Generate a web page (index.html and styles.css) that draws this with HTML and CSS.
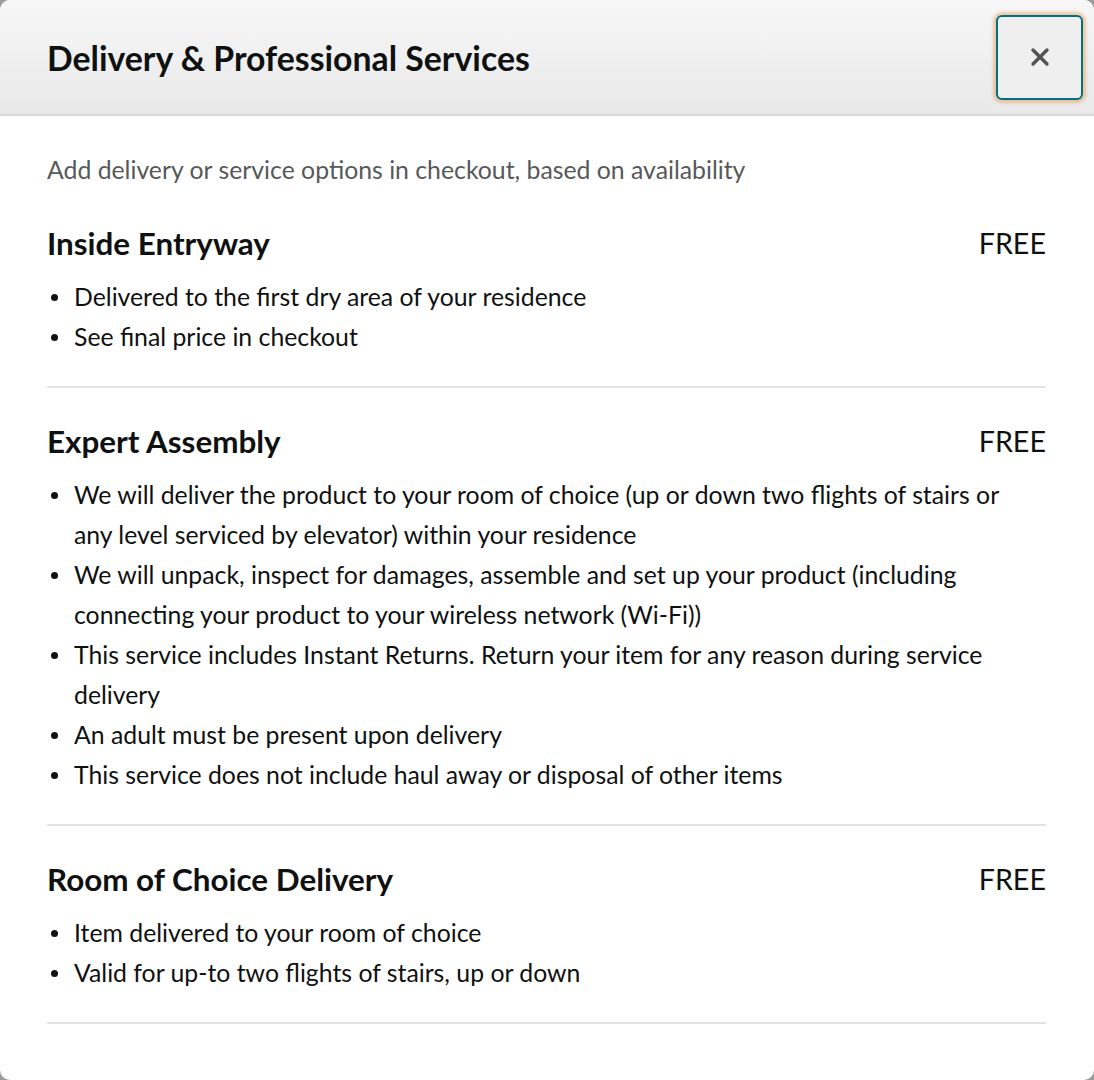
FILE: index.html
```html
<!DOCTYPE html>
<html lang="en">
<head>
    <meta charset="UTF-8">
    <meta name="viewport" content="width=device-width, initial-scale=1">
    <title>Delivery &amp; Professional Services</title>
    <link rel="stylesheet" href="styles.css">
</head>
<body>
<div class="modal">
    <div class="modal_header">
        <h1 class="modal_title">Delivery &amp; Professional Services</h1>
        <button class="close_button" aria-label="Close">
            <svg width="20" height="20" viewBox="0 0 20 20">
                <path d="M3 3 L17 17 M17 3 L3 17" stroke="#545454" stroke-width="3.4" stroke-linecap="round"/>
            </svg>
        </button>
    </div>
    <div class="modal_body">
        <p class="subtitle">Add delivery or service options in checkout, based on availability</p>

        <div class="service">
            <div class="service_head">
                <span class="service_name">Inside Entryway</span>
                <span class="service_price">FREE</span>
            </div>
            <ul class="service_list">
                <li>Delivered to the first dry area of your residence</li>
                <li>See final price in checkout</li>
            </ul>
        </div>

        <div class="service">
            <div class="service_head">
                <span class="service_name">Expert Assembly</span>
                <span class="service_price">FREE</span>
            </div>
            <ul class="service_list">
                <li>We will deliver the product to your room of choice (up or down two flights of stairs or any level serviced by elevator) within your residence</li>
                <li>We will unpack, inspect for damages, assemble and set up your product (including connecting your product to your wireless network (Wi-Fi))</li>
                <li>This service includes Instant Returns. Return your item for any reason during service delivery</li>
                <li>An adult must be present upon delivery</li>
                <li>This service does not include haul away or disposal of other items</li>
            </ul>
        </div>

        <div class="service">
            <div class="service_head">
                <span class="service_name">Room of Choice Delivery</span>
                <span class="service_price">FREE</span>
            </div>
            <ul class="service_list">
                <li>Item delivered to your room of choice</li>
                <li>Valid for up-to two flights of stairs, up or down</li>
            </ul>
        </div>
    </div>
</div>
</body>
</html>
```

FILE: styles.css
```css
* {
    box-sizing: border-box;
}

html, body {
    height: 100%;
}

body {
    margin: 0;
    background: #9a9c9c;
    font-family: Lato, "Noto Sans", sans-serif;
    color: #0f1111;
}

.modal {
    height: 100%;
    background: white;
    border-radius: 10px;
    overflow: hidden;
}

.modal_header {
    height: 116px;
    display: flex;
    align-items: center;
    justify-content: space-between;
    padding: 2px 11px 0 47px;
    background: linear-gradient(to bottom, #f7f7f7, #e9e9e9);
    border-bottom: 2px solid #d5d9d9;
}

.modal_title {
    margin: 0;
    font-size: 33.8px;
    font-weight: bold;
    line-height: 40px;
}

.close_button {
    width: 87px;
    height: 85px;
    margin-top: -2px;
    display: flex;
    align-items: center;
    justify-content: center;
    background: #efefef;
    border: 2px solid #007185;
    border-radius: 6px;
    box-shadow: 0 0 3px 3px rgba(228, 121, 17, 0.35);
    padding: 0;
    cursor: pointer;
}

.modal_body {
    padding: 34px 48px 0 47px;
}

.subtitle {
    margin: 0 0 33px;
    font-size: 24.8px;
    line-height: 40px;
    color: #565959;
}

.service {
    border-bottom: 2px solid #e3e3e3;
    padding-bottom: 29px;
    margin-bottom: 33px;
}

.service_head {
    display: flex;
    justify-content: space-between;
    align-items: center;
    line-height: 40px;
    margin-bottom: 14px;
}

.service_name {
    font-size: 31.4px;
    font-weight: bold;
}

.service_price {
    font-size: 28.7px;
}

.service_list {
    list-style: none;
    margin: 0;
    padding: 0 24px 0 0;
}

.service_list li {
    position: relative;
    padding-left: 27px;
    font-size: 24.8px;
    line-height: 40px;
}

.service_list li::before {
    content: "";
    position: absolute;
    left: 4px;
    top: 17px;
    width: 7px;
    height: 7px;
    border-radius: 50%;
    background: #0f1111;
}
```
